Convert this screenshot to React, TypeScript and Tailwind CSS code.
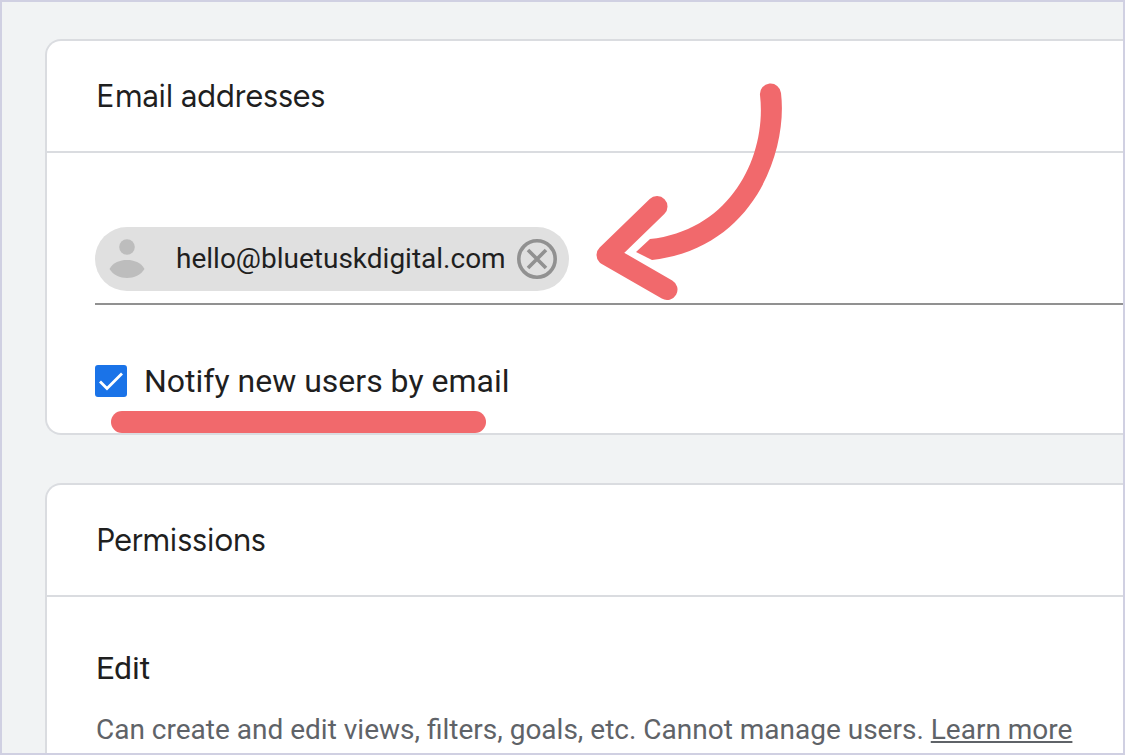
import { useState } from 'react';
import type { ReactNode } from 'react';

function Card({ title, children }: { title: string; children: ReactNode }) {
  return (
    <section className="relative rounded-l-2xl border-2 border-r-0 border-[#dadce0] bg-white">
      <header className="border-b-2 border-[#dadce0] px-[49px] py-[35px]">
        <h2 className="font-['Figtree','Lato',sans-serif] text-[32px] leading-10">{title}</h2>
      </header>
      {children}
    </section>
  );
}

function PersonIcon() {
  return (
    <svg className="size-10" viewBox="0 0 40 40" fill="#bdbdbd" aria-hidden="true">
      <circle cx="20" cy="8" r="7.800" />
      <path d="M2.500 30C6 23.500 13 21 20 21s14 2.500 17.500 9C34 36 27 39 20 39S6 36 2.500 30Z" />
    </svg>
  );
}

function ArrowDrawing() {
  return (
    <svg
      className="pointer-events-none absolute left-[533px] top-[29px] h-60 w-[220px]"
      viewBox="0 0 220 240"
      fill="none"
      aria-hidden="true"
    >
      <path
        d="M180 25A10.5 10.5 0 0 1 201 23C208 80 175 178 72 190L56 182L70 169C152 160 187 85 180 25Z"
        fill="#f1696c"
      />
      <path
        d="M77 136.500L27 185L87 219.500"
        stroke="#f1696c"
        strokeWidth="21"
        strokeLinecap="round"
        strokeLinejoin="round"
      />
    </svg>
  );
}

export default function App() {
  const [emails, setEmails] = useState(['hello@bluetuskdigital.com']);
  const [notify, setNotify] = useState(true);

  return (
    <main className="flex h-screen flex-col gap-12 overflow-hidden border-2 border-[#d0d0e2] bg-[#f1f3f4] pl-[43px] pt-[37px] font-['Roboto',sans-serif] text-[#1f1f1f]">
      <Card title="Email addresses">
        <div className="pb-8 pl-12 pt-[74px]">
          <div className="flex h-[78px] items-start border-b-2 border-[#919191]">
            {emails.map((email) => (
              <span key={email} className="flex h-16 items-center rounded-full bg-[#e0e0e0] px-3">
                <PersonIcon />
                <span className="ml-[29px] text-[28px] leading-8">{email}</span>
                <button
                  type="button"
                  aria-label={`Remove ${email}`}
                  className="ml-[11px] size-10"
                  onClick={() => setEmails(emails.filter((e) => e !== email))}
                >
                  <svg className="size-10" viewBox="0 0 40 40" fill="none" stroke="#919191" aria-hidden="true">
                    <circle cx="20" cy="20" r="18.200" strokeWidth="3.600" />
                    <path d="M11 11L29 29M29 11L11 29" strokeWidth="3.600" />
                  </svg>
                </button>
              </span>
            ))}
          </div>
          <div className="relative mt-14 flex h-10 items-center">
            <input
              id="notify"
              type="checkbox"
              checked={notify}
              onChange={(e) => setNotify(e.target.checked)}
              className="peer size-8 appearance-none rounded-[3px] border-4 border-[#5f6368] checked:border-[#1a73e8] checked:bg-[#1a73e8]"
            />
            <svg
              className="pointer-events-none invisible absolute left-0 top-1 size-8 peer-checked:visible"
              viewBox="0 0 32 32"
              fill="none"
              stroke="white"
              strokeWidth="2.800"
              aria-hidden="true"
            >
              <path d="M5 16.500L12 23.500L27 8.500" />
            </svg>
            <label htmlFor="notify" className="pl-[17px] text-[32px] leading-10">
              Notify new users by email
            </label>
            <span className="pointer-events-none absolute left-4 top-[50px] h-[22px] w-[375px] rounded-full bg-[#f1696c]" />
          </div>
        </div>
        <ArrowDrawing />
      </Card>

      <Card title="Permissions">
        <div className="px-[49px] pb-12 pt-[51px]">
          <h3 className="text-[32px] leading-10">Edit</h3>
          <p className="mt-[26px] whitespace-nowrap text-[28px] leading-8 text-[#5f6368]">
            Can create and edit views, filters, goals, etc. Cannot manage users.{' '}
            <a href="#learn-more" className="underline">
              Learn more
            </a>
          </p>
        </div>
      </Card>
    </main>
  );
}
